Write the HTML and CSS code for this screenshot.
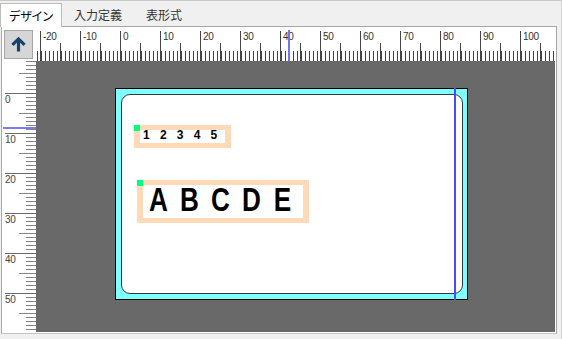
FILE: index.html
```html
<!DOCTYPE html>
<html lang="ja">
<head>
<meta charset="utf-8">
<link rel="stylesheet" href="styles.css">
</head>
<body>
<div class="win">
  <div class="tabs">
    <div class="tab active">デザイン</div>
    <div class="tab">入力定義</div>
    <div class="tab">表形式</div>
  </div>
  <div class="panel">
    <div class="corner">
      <div class="up">
        <svg width="29" height="29" viewBox="0 0 29 29"><path d="M14.5 9.5V22" stroke="#17416e" stroke-width="3.4" fill="none"/><path d="M8 15L14.5 8.5L21 15" stroke="#17416e" stroke-width="3.4" fill="none" stroke-linejoin="miter"/></svg>
      </div>
    </div>
    <div class="hruler">
      <div class="hcell">-20</div>
      <div class="hcell">-10</div>
      <div class="hcell">0</div>
      <div class="hcell">10</div>
      <div class="hcell">20</div>
      <div class="hcell">30</div>
      <div class="hcell">40</div>
      <div class="hcell">50</div>
      <div class="hcell">60</div>
      <div class="hcell">70</div>
      <div class="hcell">80</div>
      <div class="hcell">90</div>
      <div class="hcell last">100</div>
      <div class="hmark"></div>
    </div>
    <div class="vruler">
      <div class="vcell">0</div>
      <div class="vcell">10</div>
      <div class="vcell">20</div>
      <div class="vcell">30</div>
      <div class="vcell">40</div>
      <div class="vcell">50</div>
      <div class="vmark"></div>
    </div>
    <div class="canvas">
      <div class="card">
        <div class="sheet">
          <div class="tbox tb1"><span class="grip"></span><div class="t1"><span>1</span><span>2</span><span>3</span><span>4</span><span>5</span></div></div>
          <div class="tbox tb2"><span class="grip"></span><div class="t2"><span>A</span><span>B</span><span>C</span><span>D</span><span>E</span></div></div>
        </div>
        <div class="guide"></div>
      </div>
    </div>
  </div>
</div>
</body>
</html>
```
FILE: styles.css
```css
html, body { margin: 0; padding: 0; }
body {
  width: 562px;
  height: 339px;
  overflow: hidden;
  background: #f0f0f0;
  font-family: "Noto Sans CJK JP", sans-serif;
}
.win {
  width: 562px;
  height: 339px;
  box-sizing: border-box;
  border-top: 1px solid #c8c8c8;
  border-right: 1px solid #d4d4d4;
}
.tabs {
  display: flex;
  height: 25px;
}
.tab {
  margin-top: 2px;
  height: 23px;
  line-height: 23px;
  padding: 0 12px;
  font-size: 12px;
  color: #333;
  font-feature-settings: "palt";
}
.tab.active {
  width: 62px;
  height: 24px;
  box-sizing: border-box;
  padding: 0;
  text-align: center;
  background: #fff;
  border: 1px solid #bcbcbc;
  border-bottom: none;
  margin-bottom: -1px;
  position: relative;
  z-index: 1;
  color: #000;
}
.panel {
  margin-left: 1px;
  width: 556px;
  height: 308px;
  box-sizing: border-box;
  border: 1px solid #a8a8a8;
  border-bottom-color: #c4c4c4;
  background: #fff;
  padding: 3px 1px 1px 0;
  display: grid;
  grid-template-columns: 34px 519px;
  grid-template-rows: 31px 271px;
}
.corner { padding-left: 2px; }
.up {
  width: 29px;
  height: 29px;
  box-sizing: border-box;
  border: 1px solid #a6a6a6;
  background: #d6d6d6;
  display: flex;
  align-items: center;
  justify-content: center;
}
.up svg { display: block; }
.hruler {
  position: relative;
  overflow: hidden;
  display: flex;
  padding-left: 4px;
  background-color: #fff;
  background-image:
    repeating-linear-gradient(to right, #444 0 1px, transparent 1px 4px),
    repeating-linear-gradient(to right, #444 0 1px, transparent 1px 40px);
  background-size: 100% 10px, 100% 18px;
  background-position: 1px 100%, 24px 100%;
  background-repeat: no-repeat;
  font-family: "Liberation Sans", sans-serif;
}
.hcell {
  flex: 0 0 40px;
  box-sizing: border-box;
  margin-top: 1px;
  height: 30px;
  border-left: 1px solid #444;
  padding-left: 2px;
  font-size: 10px;
  line-height: 11px;
  color: #333;
  letter-spacing: -0.3px;
}
.hcell.last { flex-basis: 30px; }
.hmark {
  position: absolute;
  left: 252px;
  top: 0;
  width: 2px;
  height: 100%;
  background: #7474f0;
}
.vruler {
  position: relative;
  overflow: hidden;
  display: flex;
  flex-direction: column;
  align-items: flex-end;
  padding-top: 32px;
  box-sizing: border-box;
  background-color: #fff;
  background-image:
    repeating-linear-gradient(to bottom, #858585 0 1px, transparent 1px 4px),
    repeating-linear-gradient(to bottom, #858585 0 1px, transparent 1px 40px);
  background-size: 10px 100%, 17px 100%;
  background-position: 100% 0, 100% 12px;
  background-repeat: no-repeat;
  font-family: "Liberation Sans", sans-serif;
}
.vcell {
  flex: 0 0 40px;
  width: 31px;
  box-sizing: border-box;
  border-top: 1px solid #6a6a6a;
  font-size: 10px;
  line-height: 11px;
  color: #444;
  letter-spacing: -0.3px;
}
.vmark {
  position: absolute;
  left: 1px;
  top: 66px;
  width: 33px;
  height: 2px;
  background: #7b7bef;
}
.canvas {
  background: #696969;
  overflow: hidden;
}
.card {
  position: relative;
  margin: 27px 0 0 79px;
  width: 353px;
  height: 212px;
  box-sizing: border-box;
  border: 1px solid #000;
  background: #80ffff;
  padding: 5px 4px 5px 5px;
}
.sheet {
  height: 100%;
  box-sizing: border-box;
  border: 1px solid #2c3a3c;
  border-radius: 9px;
  background: #fff;
}
.guide {
  position: absolute;
  left: 338px;
  top: -1px;
  bottom: -1px;
  width: 2px;
  background: #4a4aff;
}
.tbox {
  position: relative;
  width: fit-content;
  background: #ffdab9;
  padding: 5px 6px;
}
.grip {
  position: absolute;
  left: 0;
  top: 0;
  width: 6px;
  height: 6px;
  background: #00ff7f;
}
.tb1 { margin: 30px 0 0 12px; }
.tb2 { margin: 32px 0 0 15px; }
.t1 {
  display: flex;
  width: 82px;
  height: 11px;
  padding: 0 0 2px 3px;
  background: #fff;
  font-family: "Liberation Sans", sans-serif;
  font-weight: bold;
  font-size: 12px;
  line-height: 11px;
  color: #000;
}
.t1 span { flex: 0 0 16.9px; }
.t1 span:last-child { flex-basis: auto; }
.t2 {
  display: flex;
  width: 160px;
  height: 29px;
  padding-bottom: 4px;
  background: #fff;
  font-family: "Liberation Sans", sans-serif;
  font-weight: bold;
  font-size: 33.5px;
  line-height: 29px;
  color: #000;
}
.t2 span {
  flex: 0 0 31px;
  text-align: center;
  transform: scaleX(0.78);
}
```
